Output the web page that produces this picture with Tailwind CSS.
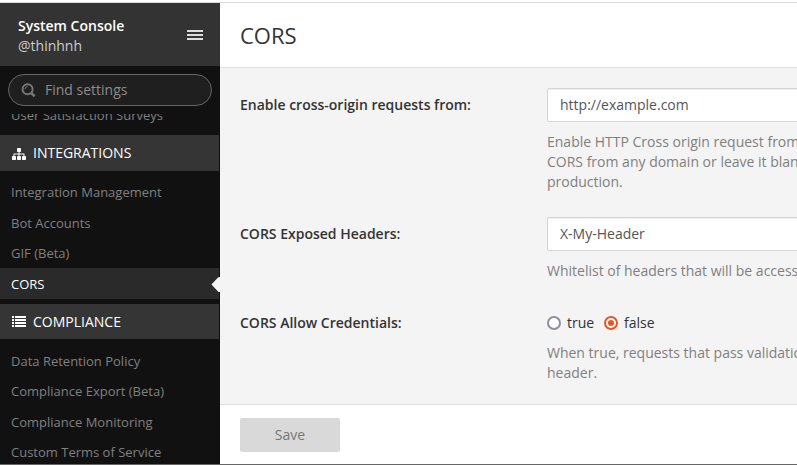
<!DOCTYPE html>
<html lang="en">
<head>
<meta charset="utf-8">
<title>System Console</title>
<script src="https://cdn.jsdelivr.net/npm/@tailwindcss/browser@4"></script>
</head>
<body class="w-[797px] h-[465px] overflow-hidden bg-white font-['Open_Sans',sans-serif] text-[14px] leading-5 text-[#333]">
<div class="flex flex-col w-full h-full border-b border-[#666]">
  <div class="h-[3px] shrink-0 border-b border-[#d9d9d9]"></div>
  <div class="flex flex-1 min-h-0">
    <aside class="w-[220px] shrink-0 bg-[#111] flex flex-col overflow-hidden">
      <header class="h-[63px] shrink-0 bg-[#333] flex items-center justify-between pl-[18px] pr-[17px]">
        <div class="pt-[3px]">
          <div class="font-semibold text-white">System Console</div>
          <div class="text-[#ccc]">@thinhnh</div>
        </div>
        <svg class="w-4 h-[10px]" viewBox="0 0 16 10" shape-rendering="crispEdges" fill="#ddd"><path d="M0 0h16v2H0zM0 4h16v2H0zM0 8h16v2H0z"/></svg>
      </header>
      <div class="h-[48px] shrink-0 px-2 pt-2">
        <div class="h-8 w-[204px] rounded-full border border-[#666] bg-[#1f1f1f] flex items-center pl-3 text-[#8c8c8c]">
          <svg class="w-[15px] h-[15px] mr-[9px]" viewBox="0 0 15 15" fill="none" stroke="#777"><circle cx="6.6" cy="6.3" r="5" stroke-width="2"/><path d="M3.9 6.3a2.7 2.7 0 0 1 2.7-2.7" stroke-width="1"/><path d="M10.1 9.9l3.5 3.4" stroke-width="2.6"/></svg>
          <span>Find settings</span>
        </div>
      </div>
      <nav class="flex-1 min-h-0 overflow-hidden text-[13px] text-[#808080]">
        <div class="h-[21px] overflow-hidden pl-[11px]"><div class="-mt-[9px]">User Satisfaction Surveys</div></div>
        <div class="h-9 w-[219px] bg-[#353535] text-white text-[14px] flex items-center pl-3">
          <svg class="w-[14px] h-3 mr-[7px] mt-[2px]" viewBox="0 0 14 12" fill="#fff"><rect x="5" y="0" width="4" height="4" rx=".7"/><rect x="0" y="8" width="4" height="4" rx=".7"/><rect x="5" y="8" width="4" height="4" rx=".7"/><rect x="10" y="8" width="4" height="4" rx=".7"/><path d="M6.5 3.5h1v2h4.6a.4.4 0 0 1 .4.4V8.5h-1v-2h-4v2h-1v-2h-4v2h-1V5.9a.4.4 0 0 1 .4-.4h4.6z"/></svg>
          <span>INTEGRATIONS</span>
        </div>
        <ul class="pt-[6px]">
          <li class="h-[30.5px] pl-[11px] leading-[30.5px]">Integration Management</li>
          <li class="h-[30.5px] pl-[11px] leading-[30.5px]">Bot Accounts</li>
          <li class="h-[30px] pl-[11px] leading-[30.5px]">GIF (Beta)</li>
          <li class="relative w-[220px] h-[31px] flex text-white">
            <span class="w-[219px] h-[31px] pl-[11px] leading-[33px] bg-[#2a2a2a]">CORS</span>
            <svg class="absolute right-0 top-[9px] w-[9px] h-[15px]" viewBox="0 0 9 15" fill="#f4f4f4"><path d="M.5 7.5L7 .5Q7.5 0 8 0H9v15H8q-.5 0-1-.5z"/></svg>
          </li>
        </ul>
        <div class="mt-[5px] h-[35px] w-[219px] bg-[#353535] text-white text-[14px] flex items-center pl-3">
          <svg class="w-[14px] h-[11px] mr-[7px]" viewBox="0 0 14 11" shape-rendering="crispEdges" fill="#fff"><path d="M0 0h2v2H0zM0 3h2v2H0zM0 6h2v2H0zM0 9h2v2H0zM3 0h11v2H3zM3 3h11v2H3zM3 6h11v2H3zM3 9h11v2H3z"/></svg>
          <span>COMPLIANCE</span>
        </div>
        <ul class="pt-[7px]">
          <li class="h-[30px] pl-[11px] leading-[30.5px]">Data Retention Policy</li>
          <li class="h-[31px] pl-[11px] leading-[30.5px]">Compliance Export (Beta)</li>
          <li class="h-[30px] pl-[11px] leading-[30.5px]">Compliance Monitoring</li>
          <li class="h-[31px] pl-[11px] leading-[30.5px]">Custom Terms of Service</li>
        </ul>
      </nav>
    </aside>
    <main class="flex-1 min-w-0 flex flex-col overflow-hidden whitespace-nowrap">
      <header class="h-[65px] shrink-0 border-b border-[#e0e0e0] pl-5 flex items-center"><h1 class="text-[22px] leading-[30px]">CORS</h1></header>
      <form class="flex-1 min-h-0 bg-[#f4f4f4] pl-5 pt-5">
        <div class="flex h-[129px]">
          <label class="w-[307px] shrink-0 pt-[7px] font-semibold">Enable cross-origin requests from:</label>
          <div class="w-[400px] shrink-0">
            <div class="h-[34px] border border-[#d5d5d5] rounded-[2px] bg-white px-3 leading-8 text-[#555] shadow-[inset_0_1px_1px_rgba(0,0,0,0.075)]">http://example.com</div>
            <p class="mt-[10px] text-[#808080]">Enable HTTP Cross origin request from<br>CORS from any domain or leave it blank<br>production.</p>
          </div>
        </div>
        <div class="flex h-[89px]">
          <label class="w-[307px] shrink-0 pt-[7px] font-semibold">CORS Exposed Headers:</label>
          <div class="w-[400px] shrink-0">
            <div class="h-[34px] border border-[#d5d5d5] rounded-[2px] bg-white px-3 leading-8 text-[#555] shadow-[inset_0_1px_1px_rgba(0,0,0,0.075)]">X-My-Header</div>
            <p class="mt-[10px] text-[#808080]">Whitelist of headers that will be accessible</p>
          </div>
        </div>
        <div class="flex">
          <label class="w-[307px] shrink-0 pt-[7px] font-semibold">CORS Allow Credentials:</label>
          <div class="w-[400px] shrink-0 pt-[7px]">
            <div class="flex items-center h-5">
              <svg class="w-[14px] h-[14px] mr-[6px]" viewBox="0 0 14 14"><circle cx="7" cy="7" r="6" fill="#fff" stroke="#8f8f9d" stroke-width="2"/></svg>
              <span class="w-[37px]">true</span>
              <svg class="w-[14px] h-[14px] mr-[6px]" viewBox="0 0 14 14"><circle cx="7" cy="7" r="6" fill="#fff" stroke="#e95420" stroke-width="2"/><circle cx="7" cy="7" r="3" fill="#e95420"/></svg>
              <span>false</span>
            </div>
            <p class="mt-[10px] text-[#808080]">When true, requests that pass validation<br>header.</p>
          </div>
        </div>
      </form>
      <footer class="h-[60px] shrink-0 border-t border-[#e0e0e0] bg-white pl-5 pt-[13px]">
        <button type="button" class="w-[100px] h-[34px] rounded-[2px] bg-[#d9d9d9] text-[#777]">Save</button>
      </footer>
    </main>
  </div>
</div>
</body>
</html>
